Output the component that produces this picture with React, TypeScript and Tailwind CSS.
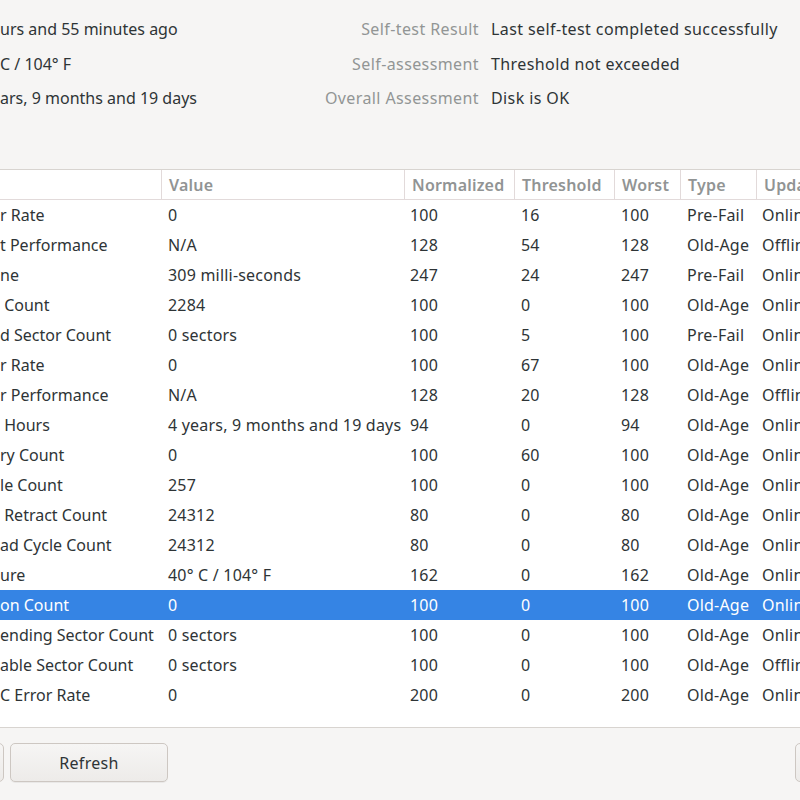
import React from 'react'

type Row = {
  name: string
  value: string
  normalized: string
  threshold: string
  worst: string
  type: string
  updates: string
  selected?: boolean
}

const rows: Row[] = [
  { name: 'r Rate', value: '0', normalized: '100', threshold: '16', worst: '100', type: 'Pre-Fail', updates: 'Online' },
  { name: 't Performance', value: 'N/A', normalized: '128', threshold: '54', worst: '128', type: 'Old-Age', updates: 'Offline' },
  { name: 'ne', value: '309 milli-seconds', normalized: '247', threshold: '24', worst: '247', type: 'Pre-Fail', updates: 'Online' },
  { name: '\u00a0Count', value: '2284', normalized: '100', threshold: '0', worst: '100', type: 'Old-Age', updates: 'Online' },
  { name: 'd Sector Count', value: '0 sectors', normalized: '100', threshold: '5', worst: '100', type: 'Pre-Fail', updates: 'Online' },
  { name: 'r Rate', value: '0', normalized: '100', threshold: '67', worst: '100', type: 'Old-Age', updates: 'Online' },
  { name: 'r Performance', value: 'N/A', normalized: '128', threshold: '20', worst: '128', type: 'Old-Age', updates: 'Offline' },
  { name: '\u00a0Hours', value: '4 years, 9 months and 19 days', normalized: '94', threshold: '0', worst: '94', type: 'Old-Age', updates: 'Online' },
  { name: 'ry Count', value: '0', normalized: '100', threshold: '60', worst: '100', type: 'Old-Age', updates: 'Online' },
  { name: 'le Count', value: '257', normalized: '100', threshold: '0', worst: '100', type: 'Old-Age', updates: 'Online' },
  { name: '\u00a0Retract Count', value: '24312', normalized: '80', threshold: '0', worst: '80', type: 'Old-Age', updates: 'Online' },
  { name: 'ad Cycle Count', value: '24312', normalized: '80', threshold: '0', worst: '80', type: 'Old-Age', updates: 'Online' },
  { name: 'ure', value: '40° C / 104° F', normalized: '162', threshold: '0', worst: '162', type: 'Old-Age', updates: 'Online' },
  { name: 'on Count', value: '0', normalized: '100', threshold: '0', worst: '100', type: 'Old-Age', updates: 'Online', selected: true },
  { name: 'ending Sector Count', value: '0 sectors', normalized: '100', threshold: '0', worst: '100', type: 'Old-Age', updates: 'Online' },
  { name: 'able Sector Count', value: '0 sectors', normalized: '100', threshold: '0', worst: '100', type: 'Old-Age', updates: 'Offline' },
  { name: 'C Error Rate', value: '0', normalized: '200', threshold: '0', worst: '200', type: 'Old-Age', updates: 'Online' },
]

const cols = 'grid grid-cols-[161px_243px_110px_100px_66px_76px_1fr]'

export default function App() {
  return (
    <div
      className="w-[800px] h-[800px] overflow-hidden bg-[#f6f5f4] text-[#2e3436] flex flex-col"
      style={{ fontFamily: '"Noto Sans", sans-serif' }}
    >
      {/* Summary */}
      <div className="h-[169px] pt-[12px] flex text-[16px] tracking-[0.4px]">
        <div className="w-[300px] flex flex-col whitespace-nowrap tracking-[0px]">
          <div className="h-[34.5px] flex items-center">urs and 55 minutes ago</div>
          <div className="h-[34.5px] flex items-center">C / 104° F</div>
          <div className="h-[34.5px] flex items-center">ars, 9 months and 19 days</div>
        </div>
        <div className="w-[179px] flex flex-col items-end whitespace-nowrap text-[#929595]">
          <div className="h-[34.5px] flex items-center">Self-test Result</div>
          <div className="h-[34.5px] flex items-center">Self-assessment</div>
          <div className="h-[34.5px] flex items-center">Overall Assessment</div>
        </div>
        <div className="pl-[12px] flex flex-col whitespace-nowrap">
          <div className="h-[34.5px] flex items-center">Last self-test completed successfully</div>
          <div className="h-[34.5px] flex items-center">Threshold not exceeded</div>
          <div className="h-[34.5px] flex items-center">Disk is OK</div>
        </div>
      </div>

      {/* Attributes table */}
      <div className="h-[559px] bg-white border-t border-b border-[#d8d4d0] text-[16px] tracking-[0.2px] whitespace-nowrap overflow-hidden">
        <div className={`${cols} h-[30px] border-b border-[#e2dada] font-semibold text-[#919494]`}>
          <div className="px-[7px] flex items-center" />
          {['Value', 'Normalized', 'Threshold', 'Worst', 'Type', 'Updates'].map((h) => (
            <div key={h} className="px-[7px] flex items-center border-l border-[#e2dada] overflow-hidden">
              {h}
            </div>
          ))}
        </div>
        {rows.map((r, i) => (
          <div
            key={i}
            className={`${cols} h-[30px] ${r.selected ? 'bg-[#3584e4] text-white' : ''}`}
          >
            <div className="flex items-center overflow-hidden tracking-[0px]">{r.name}</div>
            <div className="px-[7px] flex items-center">{r.value}</div>
            <div className="px-[6px] flex items-center">{r.normalized}</div>
            <div className="px-[7px] flex items-center">{r.threshold}</div>
            <div className="px-[7px] flex items-center">{r.worst}</div>
            <div className="px-[7px] flex items-center">{r.type}</div>
            <div className="px-[6px] flex items-center overflow-hidden">{r.updates}</div>
          </div>
        ))}
      </div>

      {/* Buttons */}
      <div className="flex-1 flex items-start pt-[15px] text-[16px] tracking-[0.3px]">
        <div className="w-[12px] h-[39px] -ml-[8px] rounded-[5px] border border-[#cdc7c2] bg-gradient-to-b from-[#f6f5f4] to-[#edebe9]" />
        <button className="ml-[6px] w-[158px] h-[39px] rounded-[5px] border border-[#cdc7c2] bg-gradient-to-b from-[#f6f5f4] to-[#edebe9] shadow-[0_1px_0_rgba(0,0,0,0.05)]">
          Refresh
        </button>
        <div className="ml-auto w-[20px] h-[39px] -mr-[15px] rounded-[5px] border border-[#cdc7c2] bg-gradient-to-b from-[#f6f5f4] to-[#edebe9]" />
      </div>
    </div>
  )
}
